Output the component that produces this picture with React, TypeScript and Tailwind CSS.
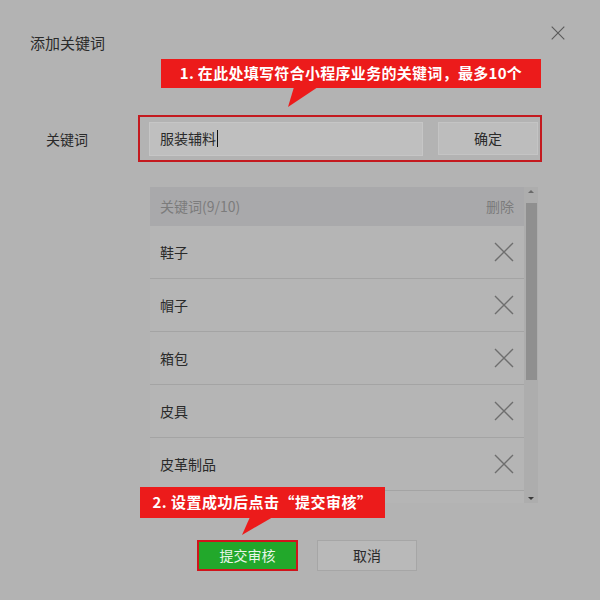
import React from "react";

const keywords = ["鞋子", "帽子", "箱包", "皮具", "皮革制品", ""];

function Cross({ size = 20, stroke = "#6e6e6e", width = 1.4 }: { size?: number; stroke?: string; width?: number }) {
  return (
    <svg width={size} height={size} viewBox="0 0 20 20" fill="none">
      <path d="M1 1 L19 19 M19 1 L1 19" stroke={stroke} strokeWidth={width} />
    </svg>
  );
}

export default function App() {
  return (
    <div
      className="relative h-[600px] w-[600px] overflow-hidden bg-[#b3b3b3] text-[#2a2a2a]"
      style={{ fontFamily: '"Microsoft YaHei", "Noto Sans CJK SC", "Noto Sans", sans-serif' }}
    >
      {/* Header */}
      <div className="px-[30px] pt-[33px]">
        <h2 className="text-[15px] leading-[20px] font-normal">添加关键词</h2>
      </div>
      <button className="absolute right-[35px] top-[26px]">
        <Cross size={14} stroke="#5a5a5a" width={1.6} />
      </button>

      {/* Input row */}
      <div className="mt-[62px] flex items-center">
        <label className="w-[138px] pl-[46px] text-[14px] leading-[20px]">关键词</label>
        <div className="flex h-[47px] w-[404px] items-center gap-[15px] border-2 border-[#c41a1f] pl-[9px] pr-[2px]">
          <div className="flex h-[34px] w-[274px] items-center border border-[#c6c6c6] bg-[#bfbfbf] px-[10px] text-[14px]">
            服装辅料
            <span className="ml-[1px] inline-block h-[17px] w-px bg-[#111]" />
          </div>
          <button className="h-[33px] w-[100px] border border-[#c4c4c4] bg-[#bdbdbd] text-[14px]">确定</button>
        </div>
      </div>

      {/* Keyword list */}
      <div className="ml-[150px] mt-[25px] flex h-[316px] w-[388px]">
        <div className="flex-1 overflow-hidden bg-[#b5b5b5]">
          <div className="flex h-[39px] items-center justify-between bg-[#a9a9ab] px-[10px] text-[14px] text-[#7c7c7c]">
            <span>关键词(9/10)</span>
            <span>删除</span>
          </div>
          {keywords.map((k, i) => (
            <div key={i} className="flex h-[53px] items-center justify-between border-b border-[#a4a4a4] px-[10px] text-[14px]">
              <span>{k}</span>
              <Cross />
            </div>
          ))}
        </div>
        <div className="flex w-[14px] flex-col items-center bg-[#adadad] py-[3px]">
          <span className="h-0 w-0 border-x-[3px] border-b-[3px] border-x-transparent border-b-[#6a6a6a]" />
          <div className="mt-[10px] h-[177px] w-[11px] bg-[#8f8f8f]" />
          <div className="flex-1" />
          <span className="h-0 w-0 border-x-[3px] border-t-[3px] border-x-transparent border-t-[#3a3a3a]" />
        </div>
      </div>

      {/* Footer buttons */}
      <div className="ml-[197px] mt-[37px] flex gap-[19px]">
        <button className="h-[31px] w-[101px] border-2 border-[#d0141c] bg-[#22a82b] text-[14px] text-[#e8f5e8]">提交审核</button>
        <button className="h-[31px] w-[100px] border border-[#a6a6a6] bg-[#b9b9b9] text-[14px]">取消</button>
      </div>

      {/* Annotations */}
      <div className="absolute left-[161px] top-[59px] flex h-[29px] w-[380px] items-center justify-center bg-[#ec1b1b] text-[15px] font-bold tracking-[0.3px] text-white">
        1. 在此处填写符合小程序业务的关键词，最多10个
      </div>
      <svg className="absolute left-0 top-0" width="600" height="600" viewBox="0 0 600 600" pointerEvents="none">
        <polygon points="294,87 318,87 288,107" fill="#ec1b1b" />
        <polygon points="250,517 273,517 242,535" fill="#ec1b1b" />
      </svg>
      <div className="absolute left-[140px] top-[487px] flex h-[31px] w-[245px] items-center justify-center bg-[#ec1b1b] text-[15px] font-bold tracking-[0.5px] text-white">
        2. 设置成功后点击“提交审核”
      </div>
    </div>
  );
}
